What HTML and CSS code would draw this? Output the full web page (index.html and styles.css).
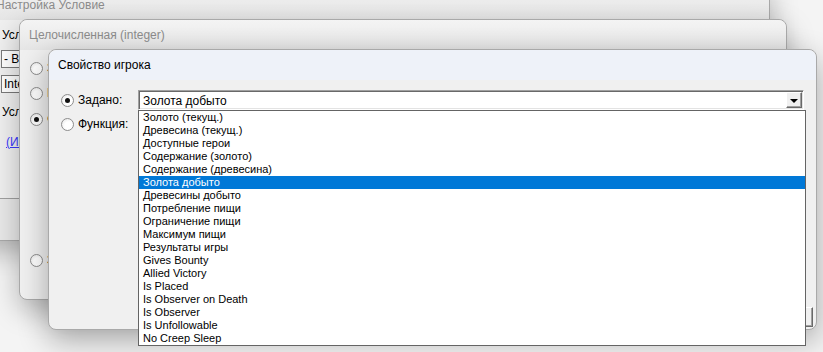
FILE: index.html
```html
<!DOCTYPE html>
<html lang="ru">
<head>
    <meta charset="UTF-8">
    <meta name="viewport" content="width=device-width, initial-scale=1.0">
    <title>Свойство игрока</title>
    <link rel="stylesheet" href="styles.css">
</head>
<body>
    <div class="desktop">
        <!-- back window -->
        <div class="window win-condition">
            <div class="titlebar inactive">Настройка Условие</div>
            <div class="win-body">
                <div class="cond-content">
                    <p class="cond-label">Условие:</p>
                    <div class="field">- Вообще -</div>
                    <div class="field">Integer</div>
                    <p class="cond-label">Условие</p>
                    <a class="cond-link" href="#">(Игрок)</a>
                </div>
                <div class="cond-footer"></div>
            </div>
        </div>

        <!-- middle window -->
        <div class="window win-integer">
            <div class="titlebar inactive">Целочисленная (integer)</div>
            <div class="win-body">
                <div class="int-options">
                    <div class="int-option"><span class="radio"></span><span>Значение</span></div>
                    <div class="int-option"><span class="radio"></span><span>Переменная</span></div>
                    <div class="int-option"><span class="radio checked"></span><span>Функция</span></div>
                    <div class="int-option last"><span class="radio"></span><span>Значение</span></div>
                </div>
            </div>
        </div>

        <!-- front window -->
        <div class="window win-player">
            <div class="titlebar active">Свойство игрока</div>
            <div class="win-body player-body">
                <div class="prop-row">
                    <span class="radio checked"></span>
                    <span class="prop-label">Задано:</span>
                    <div class="combo">
                        <span class="combo-text">Золота добыто</span>
                        <span class="combo-btn"><span class="arrow"></span></span>
                    </div>
                </div>
                <div class="prop-row">
                    <span class="radio"></span>
                    <span class="prop-label">Функция:</span>
                </div>
                <div class="player-footer">
                    <button class="win-button">OK</button>
                </div>
            </div>

            <ul class="dropdown">
                <li>Золото (текущ.)</li>
                <li>Древесина (текущ.)</li>
                <li>Доступные герои</li>
                <li>Содержание (золото)</li>
                <li>Содержание (древесина)</li>
                <li class="selected">Золота добыто</li>
                <li>Древесины добыто</li>
                <li>Потребление пищи</li>
                <li>Ограничение пищи</li>
                <li>Максимум пищи</li>
                <li>Результаты игры</li>
                <li>Gives Bounty</li>
                <li>Allied Victory</li>
                <li>Is Placed</li>
                <li>Is Observer on Death</li>
                <li>Is Observer</li>
                <li>Is Unfollowable</li>
                <li>No Creep Sleep</li>
            </ul>
        </div>
    </div>
</body>
</html>
```

FILE: styles.css
```css
body {
    margin: 0;
    background-color: #f4f4f4;
    font-family: "Liberation Sans", Arial, sans-serif;
    font-size: 12px;
    color: #000;
    overflow: hidden;
}

.desktop {
    position: relative;
    width: 823px;
    height: 352px;
    overflow: hidden;
}

.window {
    position: absolute;
    display: flex;
    flex-direction: column;
    background-color: #f0f0f0;
    border: 1px solid #a9a9a9;
    border-radius: 8px;
    box-shadow: 0 10px 28px rgba(0, 0, 0, 0.28);
}

.titlebar {
    flex: none;
    height: 30px;
    line-height: 30px;
    padding-left: 9px;
    border-radius: 8px 8px 0 0;
    white-space: nowrap;
}

.titlebar.inactive {
    color: #8c8c8c;
    background: linear-gradient(#f4f4f4, #e6e6e6);
}

.titlebar.active {
    color: #000;
    background-color: #eef2f9;
}

.win-body {
    flex: 1;
    display: flex;
    flex-direction: column;
    border-radius: 0 0 8px 8px;
}

/* back window */
.win-condition {
    left: -40px;
    top: -20px;
    width: 808px;
    height: 259px;
}

.win-condition .titlebar {
    height: 25px;
    line-height: 20px;
    padding-top: 14px;
    padding-left: 35px;
}

.cond-content {
    flex: 1;
    padding: 8px 0 0 40px;
}

.cond-label {
    margin: 0 0 8px 1px;
}

.field {
    width: 200px;
    height: 16px;
    line-height: 16px;
    padding-left: 2px;
    margin-bottom: 7px;
    background-color: #fff;
    border: 1px solid #7a7a7a;
}

.cond-content .field + .field {
    margin-bottom: 12px;
}

.cond-link {
    display: inline-block;
    margin: 8px 0 0 5px;
    color: #3a3aff;
}

.cond-footer {
    height: 41px;
    border-top: 1px solid #a0a0a0;
    background-color: #e9e9e9;
    border-radius: 0 0 8px 8px;
}

/* middle window */
.win-integer {
    left: 19px;
    top: 19px;
    width: 766px;
    height: 279px;
}

.int-options {
    display: flex;
    flex-direction: column;
    padding: 12px 0 0 10px;
}

.int-option {
    display: flex;
    align-items: center;
    gap: 4px;
    height: 12px;
    margin-bottom: 13px;
}

.int-option:nth-child(2) {
    margin-bottom: 14px;
}

.int-option.last {
    margin-top: 116px;
}

/* radio buttons */
.radio {
    flex: none;
    position: relative;
    width: 11px;
    height: 11px;
    border: 1px solid #8d8d8d;
    border-radius: 50%;
    background: radial-gradient(circle at 60% 60%, #ffffff 40%, #e2e2e2 100%);
}

.radio.checked::after {
    content: "";
    position: absolute;
    left: 3px;
    top: 3px;
    width: 5px;
    height: 5px;
    border-radius: 50%;
    background-color: #111;
}

/* front window */
.win-player {
    left: 48px;
    top: 49px;
    width: 767px;
    height: 279px;
    box-shadow: 0 10px 30px rgba(0, 0, 0, 0.32);
}

.player-body {
    padding: 10px 0 0 12px;
}

.prop-row {
    display: flex;
    align-items: center;
    height: 20px;
    margin-bottom: 4px;
}

.prop-label {
    width: 60px;
    padding-left: 4px;
}

.combo {
    display: flex;
    align-items: center;
    justify-content: space-between;
    width: 664px;
    height: 18px;
    background-color: #fff;
    border: 1px solid;
    border-color: #a0a0a0 #fff #fff #a0a0a0;
    box-shadow: inset 1px 1px 0 #696969, inset -1px -1px 0 #e3e3e3;
}

.combo-text {
    padding-left: 4px;
    padding-top: 1px;
}

.combo-btn {
    display: flex;
    align-items: center;
    justify-content: center;
    width: 14px;
    height: 14px;
    margin-right: 1px;
    background-color: #f0f0f0;
    border: 1px solid;
    border-color: #fff #696969 #696969 #fff;
    box-shadow: inset -1px -1px 0 #a0a0a0;
}

.arrow {
    width: 0;
    height: 0;
    margin-top: 1px;
    border-left: 4px solid transparent;
    border-right: 4px solid transparent;
    border-top: 4px solid #000;
}

.player-footer {
    flex: 1;
    display: flex;
    justify-content: flex-end;
    align-items: flex-end;
    padding: 0 3px 2px 0;
}

.win-button {
    width: 75px;
    height: 20px;
    font-family: inherit;
    font-size: 12px;
    background-color: #f0f0f0;
    border: 1px solid;
    border-color: #fff #696969 #696969 #fff;
    box-shadow: inset -1px -1px 0 #a0a0a0;
}

/* open dropdown list */
.dropdown {
    position: absolute;
    left: 89px;
    top: 60px;
    width: 666px;
    margin: 0;
    padding: 0;
    list-style: none;
    background-color: #fff;
    border: 1px solid #646464;
    font-size: 11px;
    z-index: 2;
}

.dropdown li {
    height: 13px;
    line-height: 13px;
    padding-left: 4px;
    white-space: nowrap;
}

.dropdown li.selected {
    background-color: #0078d7;
    color: #fff;
}
```
